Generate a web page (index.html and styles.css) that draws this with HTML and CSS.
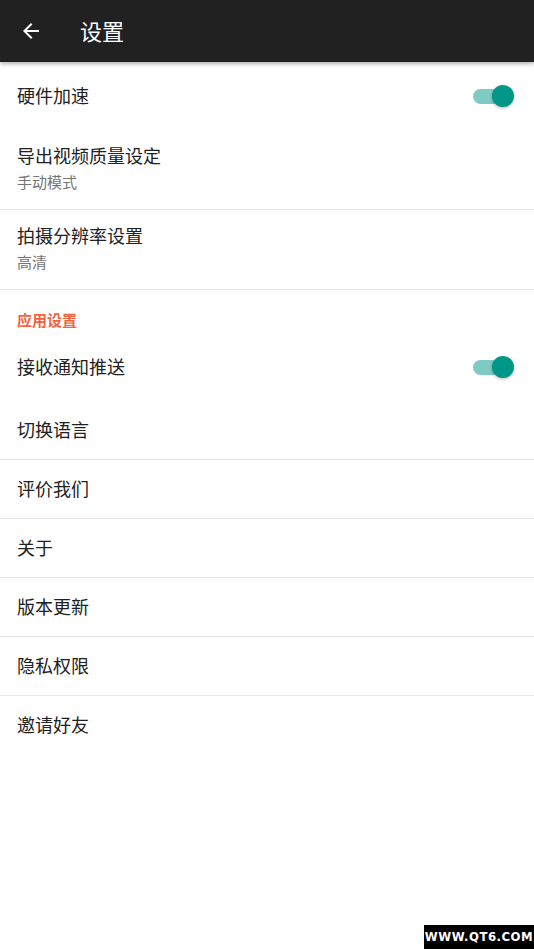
FILE: index.html
```html
<!DOCTYPE html>
<html lang="zh">
<head>
<meta charset="utf-8">
<title>设置</title>
<link rel="stylesheet" href="styles.css">
</head>
<body>
<div class="app">
  <header class="toolbar">
    <svg class="back" viewBox="0 0 24 24" width="24" height="24"><path d="M20 11H7.83l5.59-5.59L12 4l-8 8 8 8 1.41-1.41L7.83 13H20v-2z" fill="#fff"/></svg>
    <h1 class="title">设置</h1>
  </header>
  <main class="list">
    <div class="row row-toggle">
      <span class="label">硬件加速</span>
      <span class="switch"><span class="track"></span><span class="thumb"></span></span>
    </div>
    <div class="row row-two divided">
      <span class="label">导出视频质量设定</span>
      <span class="sub">手动模式</span>
    </div>
    <div class="row row-two divided">
      <span class="label">拍摄分辨率设置</span>
      <span class="sub">高清</span>
    </div>
    <div class="section">应用设置</div>
    <div class="row row-toggle">
      <span class="label">接收通知推送</span>
      <span class="switch"><span class="track"></span><span class="thumb"></span></span>
    </div>
    <div class="row row-one divided"><span class="label">切换语言</span></div>
    <div class="row row-one divided"><span class="label">评价我们</span></div>
    <div class="row row-one divided"><span class="label">关于</span></div>
    <div class="row row-one divided"><span class="label">版本更新</span></div>
    <div class="row row-one divided"><span class="label">隐私权限</span></div>
    <div class="row row-one"><span class="label">邀请好友</span></div>
  </main>
  <div class="watermark">WWW.QT6.COM</div>
</div>
</body>
</html>
```
FILE: styles.css
```css
* { box-sizing: border-box; }
html, body { margin: 0; padding: 0; background: #fff; }
body {
  font-family: "Noto Sans CJK SC", "Noto Sans", Roboto, sans-serif;
  color: #212121;
}
.app { position: relative; width: 534px; height: 949px; overflow: hidden; }
.toolbar {
  height: 62px;
  background: #212121;
  display: flex;
  align-items: center;
  padding-left: 19px;
  box-shadow: 0 2px 4px rgba(0,0,0,0.3);
  position: relative;
  z-index: 1;
}
.back { display: block; }
.title {
  margin: 0 0 3px 37px;
  font-size: 22px;
  font-weight: 400;
  color: #fff;
  line-height: 24px;
}
.list { display: flex; flex-direction: column; }
.row { display: flex; padding: 0 17px; }
.label { font-size: 18px; line-height: 24px; color: #212121; }
.row-toggle { height: 68px; align-items: center; justify-content: space-between; padding-right: 20px; }
.row-toggle .label { margin-bottom: 2px; }
.row-two { flex-direction: column; padding-top: 13px; padding-bottom: 16px; }
.sub { font-size: 15px; line-height: 22px; margin-top: 4px; color: #757575; }
.row-one { height: 59px; align-items: center; }
.row-one .label { margin-bottom: 3px; }
.divided { border-bottom: 1px solid #e6e6e6; }
.section {
  padding: 20px 17px 3px;
  font-size: 15px;
  line-height: 20px;
  font-weight: 700;
  color: #f26440;
}
.switch { position: relative; width: 42px; height: 24px; display: flex; align-items: center; }
.track { display: block; width: 36px; height: 15px; border-radius: 8px; background: #7fcbc4; margin-left: 1px; }
.thumb {
  position: absolute;
  right: 0; top: 1px;
  width: 22px; height: 22px;
  border-radius: 50%;
  background: #009688;
  box-shadow: 0 1px 3px rgba(0,0,0,0.3);
}
.watermark {
  position: absolute;
  right: 0; bottom: 0;
  width: 110px; height: 24px;
  background: #000;
  color: #fff;
  font-family: "DejaVu Sans Condensed", "DejaVu Sans", sans-serif;
  font-weight: 700;
  font-size: 13px;
  line-height: 24px;
  text-align: center;
  letter-spacing: 0.5px;
}
```
